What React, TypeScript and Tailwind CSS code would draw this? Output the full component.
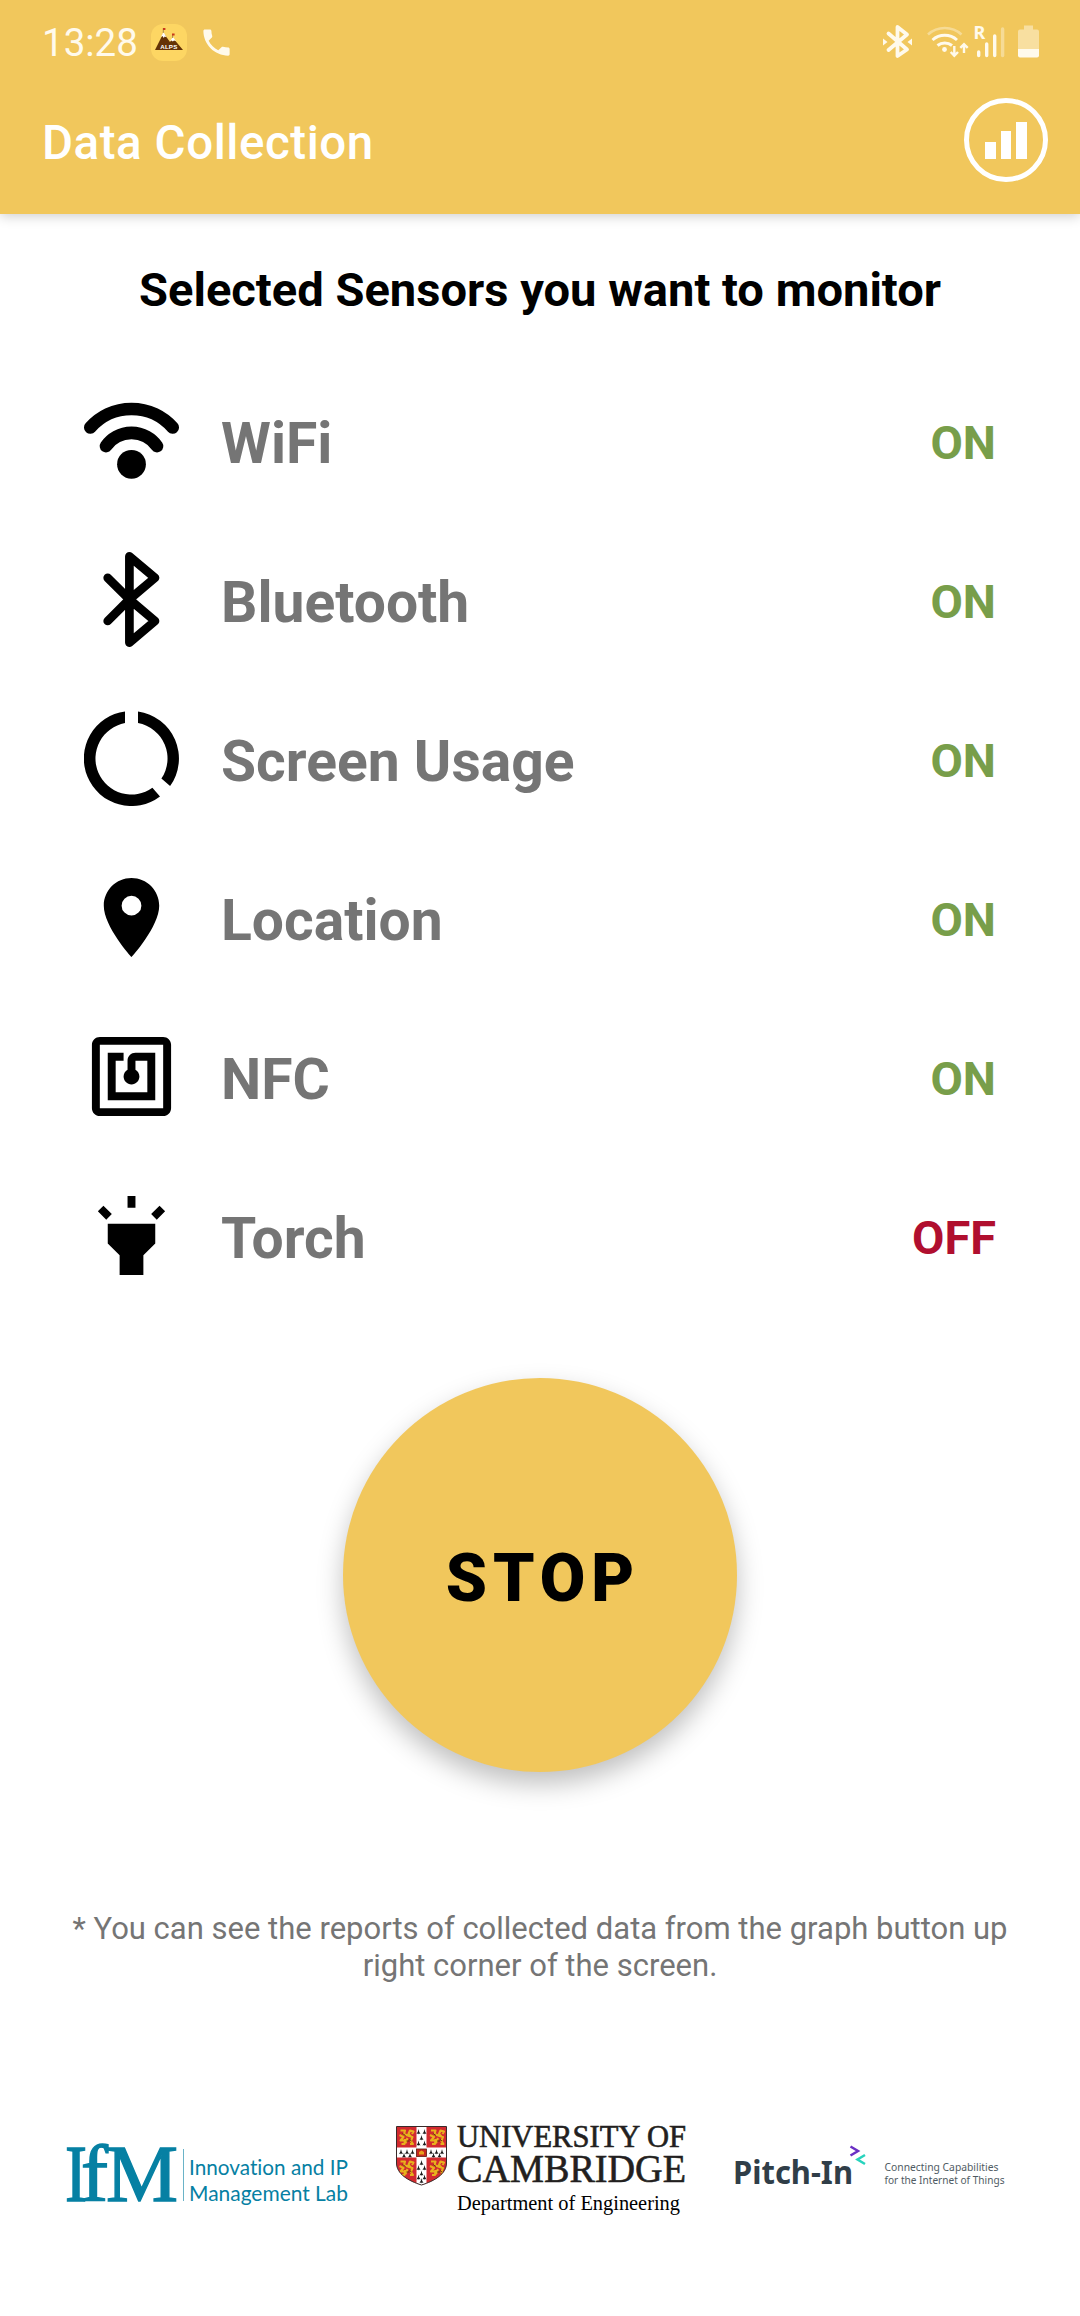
import React from "react";
import { MdPlace, MdNfc, MdHighlight, MdPhone } from "react-icons/md";

const ICON = "block h-[95px] w-[95px]";

function WifiIcon() {
  return (
    <svg viewBox="0 0 95 95" className={ICON} fill="none" stroke="black" strokeWidth="12.6" strokeLinecap="round">
      <path d="M6.3 34.5A55 55 0 0 1 88.7 34.5" />
      <path d="M22 53.1A31.2 31.2 0 0 1 73 53.1" />
      <circle cx="47.5" cy="71.3" r="14.4" fill="black" stroke="none" />
    </svg>
  );
}

function BluetoothIcon() {
  return (
    <svg viewBox="0 0 95 95" className={ICON} fill="none" stroke="black" strokeWidth="8.7" strokeLinecap="round" strokeLinejoin="round">
      <path d="M23.7 25.8L45.4 47.4 71 69 45.4 90.6V4.4L71 25.8 45.4 47.4 23.7 69" />
    </svg>
  );
}

function UsageIcon() {
  return (
    <svg viewBox="0 0 95 95" className={ICON}>
      <path d="M41 .45A47.5 47.5 0 1 0 76 85.4L68.4 76.8A36 36 0 1 1 41 12.1Z" />
      <path d="M54 .45A47.5 47.5 0 0 1 86.1 75.1L77.4 67.6A36 36 0 0 0 54 12.1Z" />
    </svg>
  );
}

const sensors = [
  { name: "WiFi", on: true, icon: <WifiIcon /> },
  { name: "Bluetooth", on: true, icon: <BluetoothIcon /> },
  { name: "Screen Usage", on: true, icon: <UsageIcon /> },
  { name: "Location", on: true, icon: <MdPlace className={ICON} /> },
  { name: "NFC", on: true, icon: <MdNfc className={ICON} /> },
  { name: "Torch", on: false, icon: <MdHighlight className={ICON} /> },
];

function AlpsIcon() {
  return (
    <svg viewBox="0 0 36 37" className="ml-[13px] h-[37px] w-[36px]">
      <rect width="36" height="37" rx="12" fill="#fdd663" />
      <path d="M4 26L12.5 9 19 18 22 14 32 26Z" fill="#643206" />
      <path d="M12.5 8L10 13l1.5-1 1.2 2 1-1.5 1.8.8ZM22 13l-3 4 1.6-.5 1.2 1 1.2-1 2 .6Z" fill="#fff" />
      <path d="M12.3 9V4M21.6 14v-4" stroke="#8a6a30" strokeWidth=".7" />
      <path d="M12 4h2.4v2H12zM21 9.6h2.6v1.8H21z" fill="#c9381c" />
      <text x="9.3" y="25" fontFamily="Liberation Sans" fontWeight="700" fontSize="6.2" textLength="17" fill="#fff">ALPS</text>
    </svg>
  );
}

function StatusIcons() {
  return (
    <svg viewBox="0 0 160 36" className="h-[36px] w-[160px] overflow-visible" fill="none" stroke="#fffaec">
      <g strokeWidth="3.8" strokeLinejoin="round" strokeLinecap="round">
        <path d="M5.5 9.5L24 25.5 14.5 32V3L24 10.5 5.5 26" />
      </g>
      <path d="M0 14.5l4.5 3.5L0 21.5ZM29 14.5L24.5 18l4.5 3.5Z" fill="#fffaec" stroke="none" />
      <path d="M45 10.5A25 25 0 0 1 78.5 10.5" strokeWidth="2.6" opacity=".4" />
      <path d="M49.5 16A18.5 18.5 0 0 1 74 16M54.5 21.5A11.5 11.5 0 0 1 69 21.5" strokeWidth="3" />
      <circle cx="61.5" cy="25.5" r="2.4" fill="#fffaec" stroke="none" />
      <path d="M71.3 22v9M67.7 28l3.6 3.8 3.7-3.8M81 29v-8M77.3 23.8l3.7-3.7 3.7 3.7" strokeWidth="2.4" />
      <text x="90.5" y="14.5" fontFamily="Noto Sans" fontWeight="700" fontSize="18" fill="#fffaec" stroke="none">R</text>
      <g strokeWidth="3.4" strokeLinecap="round">
        <path d="M95.7 28v3.5M103.7 20v11.5M111.7 12v19.5" />
        <path d="M119.6 5v26.5" opacity=".4" />
      </g>
      <path d="M141 1.5h9v4h4q2 0 2 2v17.5h-21V7.5q0-2 2-2h4Z" fill="#f8dfa0" stroke="none" />
      <path d="M135 25h21v6.5q0 2-2 2h-17q-2 0-2-2Z" fill="#fffaec" stroke="none" />
    </svg>
  );
}

function IfmLogo() {
  return (
    <svg viewBox="0 0 284 64" className="h-[64px] w-[284px] overflow-visible" fill="#0680a3">
      <g fontFamily="Liberation Serif" fontSize="80" stroke="#0680a3" strokeWidth="1.4">
        <text x="-1" y="56.5" textLength="22" lengthAdjust="spacingAndGlyphs">I</text>
        <text x="15" y="56.5" textLength="27" lengthAdjust="spacingAndGlyphs">f</text>
        <text x="40" y="56.5" textLength="72" lengthAdjust="spacingAndGlyphs">M</text>
      </g>
      <rect x="117" y="5" width="1" height="52" opacity=".6" />
      <g fontFamily="Lato" fontSize="22" className="[font-variant-ligatures:none]">
        <text x="123" y="31" textLength="159" lengthAdjust="spacingAndGlyphs">Innovation and IP</text>
        <text x="123" y="56.5" textLength="159" lengthAdjust="spacingAndGlyphs">Management Lab</text>
      </g>
    </svg>
  );
}

function Lion({ x, y }: { x: number; y: number }) {
  return (
    <g transform={`translate(${x} ${y})`} fill="none" stroke="#e8b21c" strokeWidth="2.1" strokeLinejoin="round">
      <path d="M2 1.5h4.5L5.5 5l5 2 3.5 1-1.5 4 2 3h-3M1 6l4 2-3 3.5h4M6.5 10L6 15H3M9 9l-2 5M13 8l-3-3 1.5-3.5 3.5 1-1.5 2.5" />
      <path d="M4 4.5l3 2M8 12h3M11 10.5l2 1.5" stroke="#5b2a08" strokeWidth=".9" />
    </g>
  );
}

function Ermine({ x, y }: { x: number; y: number }) {
  return <path transform={`translate(${x} ${y})`} d="M0 0l.6 2.5L2 5 .4 4.5 0 5.5l-.4-1L-2 5l1.4-2.5Z" fill="#1b1b1b" />;
}

const ermine = [
  [22.5, 3], [28.5, 3], [25.5, 9], [22.5, 14.5], [28.5, 14.5],
  [5, 23], [11, 23], [16.5, 23], [8, 26.5], [14, 26.5],
  [35, 23], [40.5, 23], [46, 23], [37.5, 26.5], [43.5, 26.5],
  [25.5, 34], [22.5, 39], [28.5, 39], [25.5, 44.5], [22.5, 48.5], [28.5, 48.5], [25.5, 52],
];

function CambridgeLogo() {
  return (
    <svg viewBox="0 0 292 92" className="h-[92px] w-[292px] overflow-visible">
      <clipPath id="shield">
        <path d="M.5.5h50V37c0 11-12 18-25 22C12.5 55 .5 48 .5 37Z" />
      </clipPath>
      <g clipPath="url(#shield)">
        <rect width="51" height="60" fill="#d22a2f" />
        <path d="M20.5 0h10v60h-10zM0 21.5h51v10H0z" fill="#fff" />
        <Lion x={2.5} y={3} />
        <Lion x={33} y={3} />
        <Lion x={2.5} y={34} />
        <Lion x={33} y={34} />
        {ermine.map(([x, y], i) => (
          <Ermine key={i} x={x} y={y} />
        ))}
        <rect x="20.5" y="23" width="10" height="7.5" fill="#c5281f" stroke="#5b1a10" strokeWidth=".8" />
        <path d="M23 28.5v-2.5l2.5-1.5 2.5 1.5v2.5Z" fill="#e8a21c" />
      </g>
      <path d="M.5.5h50V37c0 11-12 18-25 22C12.5 55 .5 48 .5 37Z" fill="none" stroke="#3a2a2a" strokeWidth="1" />
      <g fontFamily="Liberation Serif" fill="#231f20" stroke="#231f20" strokeWidth=".6">
        <text x="61" y="21" fontSize="31" textLength="229" lengthAdjust="spacingAndGlyphs">UNIVERSITY OF</text>
        <text x="61" y="55.5" fontSize="39" textLength="229" lengthAdjust="spacingAndGlyphs">CAMBRIDGE</text>
      </g>
      <text x="61" y="84" fontFamily="Liberation Serif" fontSize="20" textLength="223" lengthAdjust="spacingAndGlyphs">Department of Engineering</text>
    </svg>
  );
}

function PitchInLogo() {
  return (
    <svg viewBox="0 0 274 48" className="h-[48px] w-[274px] overflow-visible" fill="#303e48">
      <text x="-2" y="39" fontFamily="Noto Sans" fontWeight="700" fontSize="33" textLength="120" lengthAdjust="spacingAndGlyphs">Pitch-In</text>
      <path d="M115.5 1.5l7.5 4.5-7.5 4.5" fill="none" stroke="#6a2fc4" strokeWidth="2.5" />
      <path d="M130 10l-7.5 4.5 7.5 4.5" fill="none" stroke="#27d3bd" strokeWidth="2.5" />
      <g fontFamily="Noto Sans" fontSize="10.3" opacity=".85">
        <text x="149.5" y="25.5" textLength="114" lengthAdjust="spacingAndGlyphs">Connecting Capabilities</text>
        <text x="149.5" y="39.3" textLength="120" lengthAdjust="spacingAndGlyphs">for the Internet of Things</text>
      </g>
    </svg>
  );
}

export default function App() {
  return (
    <div className="flex h-[2316px] w-[1080px] flex-col bg-white font-['Roboto',sans-serif]">
      <header className="flex h-[214px] flex-col bg-[#f1c75c] shadow-[0_2px_12px_rgba(0,0,0,0.2)]">
        <div className="flex h-[84px] items-center pl-[42px] pr-[37px]">
          <span className="pt-[2px] text-[38.5px] leading-[84px] text-[#fffaec]">13:28</span>
          <AlpsIcon />
          <MdPhone className="ml-[12px] h-[35px] w-[35px] text-[#fffaec]" />
          <div className="ml-auto">
            <StatusIcons />
          </div>
        </div>
        <div className="flex h-[112px] items-center justify-between pl-[42px] pr-[32px]">
          <h1 className="pt-[7px] text-[47.5px] font-medium tracking-[0.55px] text-white">Data Collection</h1>
          <button className="flex h-[84px] w-[84px] items-center justify-center rounded-full border-[5px] border-white">
            <svg viewBox="0 0 42 38" className="h-[38px] w-[42px]" fill="white">
              <path d="M0 21h11v17H0zM16 10h10v28H16zM31 1h11v37H31z" />
            </svg>
          </button>
        </div>
      </header>

      <h2 className="mt-[46px] text-center text-[47.1px] leading-[60px] font-bold text-black">
        Selected Sensors you want to monitor
      </h2>

      <ul className="mt-[41px] flex flex-col pl-[84px] pr-[84px]">
        {sensors.map((s) => (
          <li key={s.name} className="flex h-[159px] items-center">
            {s.icon}
            <span className="ml-[42px] pt-[6px] text-[57px] font-bold text-[#757575]">{s.name}</span>
            <span className={s.on ? "ml-auto pt-[6px] text-[47px] font-bold text-[#789e4a]" : "ml-auto pt-[6px] text-[47px] font-bold text-[#b00f2f]"}>
              {s.on ? "ON" : "OFF"}
            </span>
          </li>
        ))}
      </ul>

      <button className="mx-auto mt-[63px] flex h-[394px] w-[394px] items-center justify-center rounded-full bg-[#f1c75c] shadow-[0_12px_26px_rgba(0,0,0,0.25)]">
        <span className="pt-[6px] pl-[6px] text-[66px] font-black tracking-[6px] text-black">STOP</span>
      </button>

      <p className="mx-auto mt-[138px] w-[960px] text-center text-[31px] leading-[37px] text-[#757575]">
        * You can see the reports of collected data from the graph button up right corner of the screen.
      </p>

      <footer className="mt-[142px] flex items-start pl-[66px]">
        <div className="mt-[18px]"><IfmLogo /></div>
        <div className="ml-[46px]"><CambridgeLogo /></div>
        <div className="ml-[47px] mt-[19px]"><PitchInLogo /></div>
      </footer>
    </div>
  );
}
